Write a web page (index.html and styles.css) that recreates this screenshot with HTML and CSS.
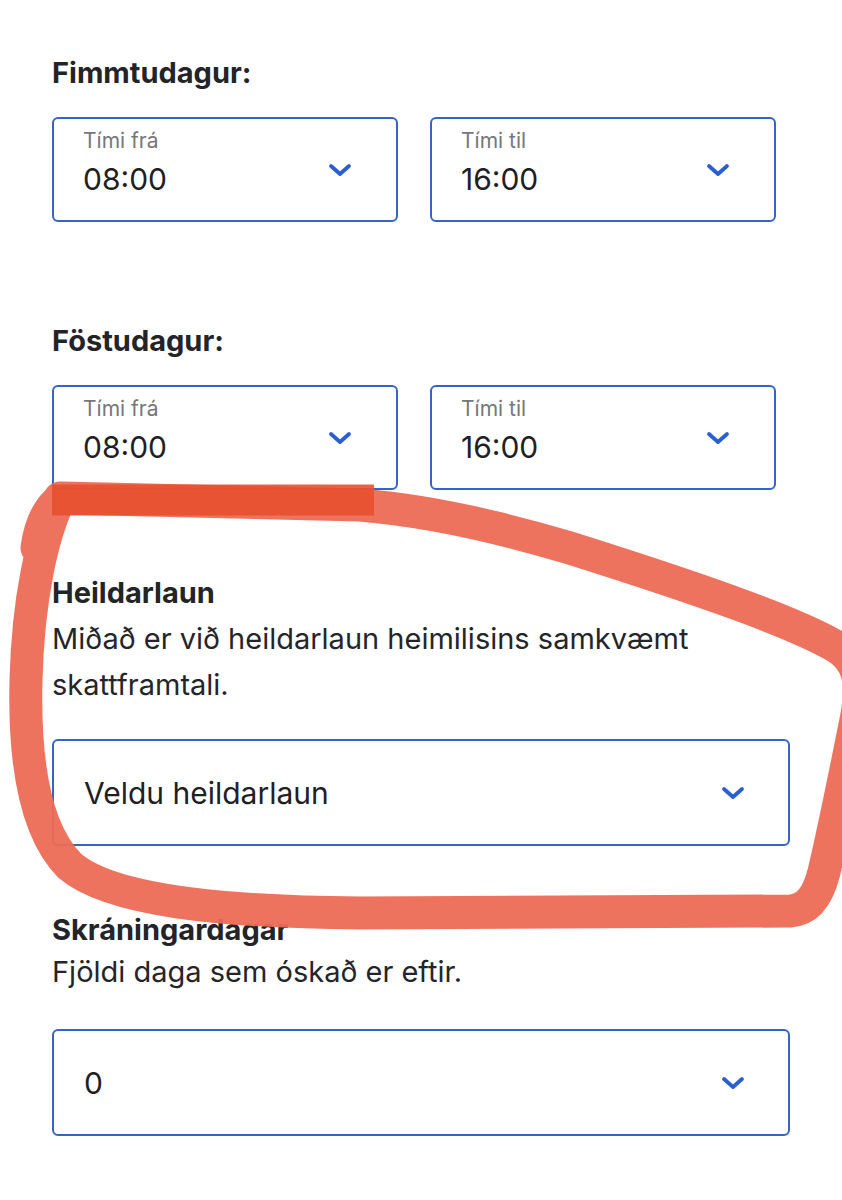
FILE: index.html
```html
<!DOCTYPE html>
<html lang="is">
<head>
<meta charset="utf-8">
<title>Umsókn</title>
<link rel="stylesheet" href="styles.css">
</head>
<body>
<main class="page">
  <section class="day">
    <h2 class="heading">Fimmtudagur:</h2>
    <div class="time-row">
      <div class="field">
        <div class="field-text"><span class="field-label">Tími frá</span><span class="field-value">08:00</span></div>
        <svg class="chevron" viewBox="0 0 24 14"><path d="M3 3 L12 11 L21 3"/></svg>
      </div>
      <div class="field">
        <div class="field-text"><span class="field-label">Tími til</span><span class="field-value">16:00</span></div>
        <svg class="chevron" viewBox="0 0 24 14"><path d="M3 3 L12 11 L21 3"/></svg>
      </div>
    </div>
  </section>
  <section class="day">
    <h2 class="heading">Föstudagur:</h2>
    <div class="time-row">
      <div class="field">
        <div class="field-text"><span class="field-label">Tími frá</span><span class="field-value">08:00</span></div>
        <svg class="chevron" viewBox="0 0 24 14"><path d="M3 3 L12 11 L21 3"/></svg>
      </div>
      <div class="field">
        <div class="field-text"><span class="field-label">Tími til</span><span class="field-value">16:00</span></div>
        <svg class="chevron" viewBox="0 0 24 14"><path d="M3 3 L12 11 L21 3"/></svg>
      </div>
    </div>
  </section>
  <section class="group group-income">
    <h2 class="heading">Heildarlaun</h2>
    <p class="desc">Miðað er við heildarlaun heimilisins samkvæmt skattframtali.</p>
    <div class="select">
      <span class="select-value">Veldu heildarlaun</span>
      <svg class="chevron" viewBox="0 0 24 14"><path d="M3 3 L12 11 L21 3"/></svg>
    </div>
  </section>
  <section class="group group-days">
    <h2 class="heading">Skráningardagar</h2>
    <p class="desc">Fjöldi daga sem óskað er eftir.</p>
    <div class="select">
      <span class="select-value">0</span>
      <svg class="chevron" viewBox="0 0 24 14"><path d="M3 3 L12 11 L21 3"/></svg>
    </div>
  </section>
</main>
<svg class="annotation" viewBox="0 0 842 1200" aria-hidden="true">
  <path class="scribble" d="M 60 498 C 42 535, 28 600, 26 680 C 24 760, 34 830, 70 866 C 110 900, 220 912, 360 913 L 790 911 C 808 910, 818 896, 824 872 C 834 830, 846 770, 856 720 C 864 680, 858 660, 835 646 C 790 620, 690 586, 570 548 C 490 524, 420 510, 360 505 L 62 498 C 48 508, 40 525, 37 548"/>
  <path class="scribble-dark" d="M 52 500 L 374 500"/>
</svg>
</body>
</html>
```

FILE: styles.css
```css
html, body {
  margin: 0;
  padding: 0;
  background: #ffffff;
  overflow: hidden;
}

body {
  position: relative;
  width: 842px;
  height: 1200px;
  font-family: Inter, "Open Sans", "Noto Sans", sans-serif;
  color: #222326;
}

.page {
  padding: 55px 0 0 52px;
}

.heading {
  margin: 0;
  font-size: 29px;
  line-height: 36px;
  font-weight: 700;
  color: #232428;
}

.day .heading {
  margin-bottom: 26px;
}

.day + .day {
  margin-top: 101px;
}

.time-row {
  display: grid;
  grid-template-columns: 346px 346px;
  column-gap: 32px;
}

.field {
  box-sizing: border-box;
  height: 105px;
  border: 2px solid #3564c9;
  border-radius: 6px;
  display: flex;
  align-items: center;
  padding: 0 44px 0 29px;
}

.field-text {
  flex: 1;
  display: flex;
  flex-direction: column;
  align-self: flex-start;
  padding-top: 9px;
}

.field-label {
  font-size: 21px;
  line-height: 26px;
  color: #76777a;
}

.field-value {
  margin-top: 7px;
  font-size: 30px;
  line-height: 36px;
  color: #1f2023;
}

.chevron {
  width: 24px;
  height: 14px;
  flex: none;
}

.chevron path {
  fill: none;
  stroke: #2b5fd1;
  stroke-width: 3.8;
  stroke-linecap: round;
  stroke-linejoin: round;
}

.group-income {
  margin-top: 85px;
}

.group-days {
  margin-top: 66px;
}

.desc {
  margin: 5px 0 0 0;
  width: 720px;
  font-size: 29px;
  line-height: 46px;
  color: #24252a;
}

.group-income .desc {
  margin-bottom: 31px;
}

.group-days .desc {
  margin-top: 1px;
  margin-bottom: 34px;
}

.select {
  box-sizing: border-box;
  width: 738px;
  height: 107px;
  border: 2px solid #3564c9;
  border-radius: 6px;
  display: flex;
  align-items: center;
  justify-content: space-between;
  padding: 0 43px 0 30px;
}

.select-value {
  font-size: 30px;
  line-height: 36px;
  color: #1f2023;
}

.annotation {
  position: absolute;
  left: 0;
  top: 0;
  width: 842px;
  height: 1200px;
  pointer-events: none;
}

.scribble {
  fill: none;
  stroke: #ec6b55;
  stroke-width: 33;
  stroke-linecap: round;
  stroke-linejoin: round;
  opacity: 0.95;
}

.scribble-dark {
  fill: none;
  stroke: #e6502f;
  stroke-width: 31;
  stroke-linecap: butt;
  opacity: 0.9;
}
```
